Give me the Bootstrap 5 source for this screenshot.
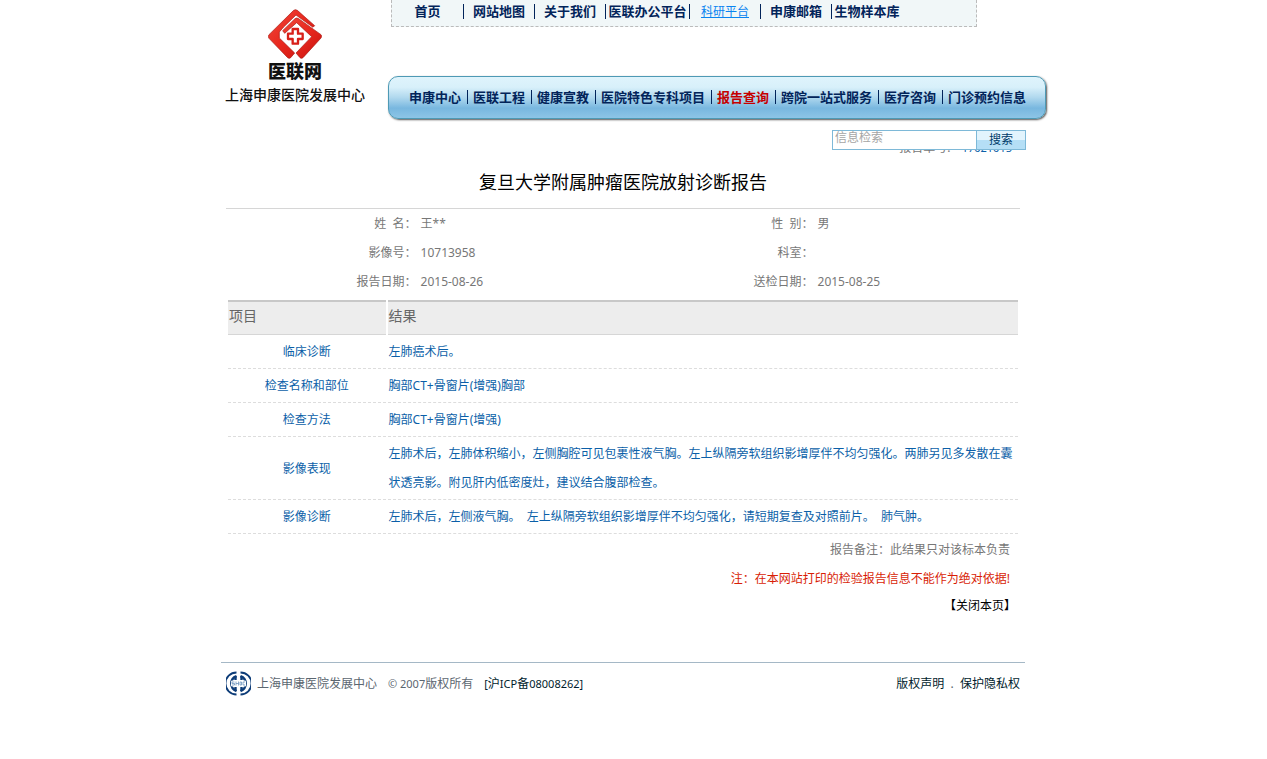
<!DOCTYPE html>
<html lang="zh-CN">
<head>
<meta charset="utf-8">
<meta name="viewport" content="width=device-width, initial-scale=1">
<title>复旦大学附属肿瘤医院放射诊断报告</title>
<link href="https://cdn.jsdelivr.net/npm/bootstrap@5.3.0/dist/css/bootstrap.min.css" rel="stylesheet">
<style>
body{font-family:"Noto Sans","Noto Sans CJK SC",sans-serif;font-size:12px;line-height:29px;color:#777;background:#fff}
a{text-decoration:none;color:inherit}
.page-wrap{max-width:825px}
.brand-col{width:148px;padding-top:9px;color:#111}
.brand-name{font-size:18px;line-height:24px;font-weight:900}
.brand-org{font-size:14px;line-height:24px;font-weight:500;white-space:nowrap}
.nav-col{max-width:658px}
.bold-links{font-size:13px;font-weight:700;line-height:14px;color:#02245a}
.bold-links li{white-space:nowrap}
.top-links{max-width:586px;margin-left:3px;background:#f1f7f8;border:1px dashed #bbb;border-top:0;padding:4px 0 7px}
.top-links li{min-width:71px;text-align:center}
.top-links li.wide-item{min-width:84px}
.top-links li+li,.main-links li+li{border-left:1px solid #02245a}
.top-links .current{font-size:12px;font-weight:400;color:#0a84f0;text-decoration:underline}
.main-links{margin-top:49px;padding:13px 0 14px 15px;border:1px solid #4e9ab5;border-radius:10px;background:linear-gradient(#dff4fc 0%,#d8f0fa 25%,#b0d8ee 50%,#78b7df 76%,#8dc5e6 100%);box-shadow:1px 1px 2px #555}
.main-links li{padding:0 6px 0 5px}
.main-links .current{color:#c60000}
.report{padding-right:21px;margin-top:14px}
.search-box{position:absolute;top:-3px;right:20px;width:194px;height:20px;border:1px solid #7eb9d8;background:#fff}
.search-box input{border:0;padding:0 2px;min-width:0;font-size:12px;line-height:14px;height:14px;color:#777}
.search-box input::placeholder{color:#a5a5a5;opacity:1}
.search-box button{flex:0 0 49px;border:0;border-left:1px solid #7eb9d8;padding:0;font-size:12px;line-height:16px;color:#003c6a;background:linear-gradient(#e2f4fd 50%,#b5dff6 50%)}
.serial-no{padding-right:13px;height:29px}
.serial-no span{color:#0b5fa8;margin-left:8px}
.latin{font-size:11px}
.sheet{margin:0 5px}
.sheet h1{font-size:18px;font-weight:400;line-height:40px;color:#000;padding-bottom:6px;border-bottom:1px solid #d6d6d6}
.facts{grid-template-columns:24% 26% 24% 26%;padding-bottom:4px}
.facts dt{font-weight:400;text-align:right}
.facts dd{padding-left:4px}
.results{width:100%;border-collapse:separate;border-spacing:2px 0;table-layout:fixed;color:#0b5fa8}
.results col:first-child{width:20%}
.results thead th{font-size:14px;font-weight:400;color:#666;line-height:28px;padding:0 1px 4px;background:#ededed;border-top:2px solid #c8c8c8;border-bottom:1px solid #d6d6d6}
.results tbody td,.results tbody th{font-weight:400;padding:2px 1px;border-bottom:1px dashed #ddd}
.results tbody th{text-align:center}
.notes{padding:1px 10px 0 0}
.warn{color:#d81e06}
.close-line{line-height:25px;color:#000;padding-right:4px}
.foot{margin:44px 21px 0 0;padding:6px 5px;border-top:1px solid #a5b8c6;color:#5b6670}
.foot-left{column-gap:6px}
.foot-text{column-gap:11px}
.foot a{color:#001c2c}
@media (max-width:800px){.nav-col{max-width:none}.bold-links{flex-wrap:wrap;row-gap:8px}}
</style>
</head>
<body>
<div class="page-wrap mx-auto">
  <header class="d-flex justify-content-between">
    <a href="#" class="brand-col d-flex flex-column align-items-center flex-shrink-0">
      <svg width="54" height="50" viewBox="172 25 162 150" aria-hidden="true">
        <defs><linearGradient id="red" x1="0" y1="0" x2="1" y2="1"><stop offset="0" stop-color="#f0483a"/><stop offset=".5" stop-color="#e8281e"/><stop offset="1" stop-color="#c8120e"/></linearGradient></defs>
        <g fill="url(#red)" stroke="#a81812" stroke-width="2" stroke-linejoin="round">
          <path d="M249 29Q254 25 260 29L312 75L307 80L256 43L219 79L206 94V112L252 157L240 171Q236 175 231 171L175 113Q171 107 175 102Z"/>
          <path d="M253 54Q258 50 264 54L331 102Q335 107 331 112L277 171Q272 175 268 171L256 157L303 108L258 66L222 98L216 90Z"/>
        </g>
        <path d="M246 85h16v14h14v16h-14v14h-16v-14h-14v-16h14z" fill="#fff" stroke="#d8201a" stroke-width="7" stroke-linejoin="round"/>
      </svg>
      <span class="brand-name">医联网</span>
      <span class="brand-org">上海申康医院发展中心</span>
    </a>
    <div class="nav-col flex-grow-1">
      <nav aria-label="站点">
        <ul class="top-links bold-links list-unstyled d-flex mb-0">
          <li><a href="#">首页</a></li><li><a href="#">网站地图</a></li><li><a href="#">关于我们</a></li><li class="wide-item"><a href="#">医联办公平台</a></li><li><a href="#" class="current">科研平台</a></li><li><a href="#">申康邮箱</a></li><li><a href="#">生物样本库</a></li>
        </ul>
      </nav>
      <nav aria-label="主导航">
        <ul class="main-links bold-links list-unstyled d-flex mb-0">
          <li><a href="#">申康中心</a></li><li><a href="#">医联工程</a></li><li><a href="#">健康宣教</a></li><li><a href="#">医院特色专科项目</a></li><li><a href="#" class="current">报告查询</a></li><li><a href="#">跨院一站式服务</a></li><li><a href="#">医疗咨询</a></li><li><a href="#">门诊预约信息</a></li>
        </ul>
      </nav>
    </div>
  </header>

  <main class="report position-relative">
    <form class="search-box d-flex" role="search">
      <input type="text" class="flex-grow-1" placeholder="信息检索" aria-label="信息检索">
      <button type="button">搜索</button>
    </form>
    <p class="serial-no text-end mb-0">报告单号: <span class="latin">17021015</span></p>
    <div class="sheet">
      <h1 class="text-center mb-0">复旦大学附属肿瘤医院放射诊断报告</h1>
      <dl class="facts d-grid mb-0">
        <dt>姓&nbsp; 名：</dt><dd class="mb-0">王**</dd><dt>性&nbsp; 别：</dt><dd class="mb-0">男</dd>
        <dt>影像号：</dt><dd class="mb-0">10713958</dd><dt>科室：</dt><dd class="mb-0"></dd>
        <dt>报告日期：</dt><dd class="mb-0">2015-08-26</dd><dt>送检日期：</dt><dd class="mb-0">2015-08-25</dd>
      </dl>
      <table class="results">
        <colgroup><col><col></colgroup>
        <thead><tr><th scope="col">项目</th><th scope="col">结果</th></tr></thead>
        <tbody>
          <tr><th scope="row">临床诊断</th><td>左肺癌术后。</td></tr>
          <tr><th scope="row">检查名称和部位</th><td>胸部CT+骨窗片(增强)胸部</td></tr>
          <tr><th scope="row">检查方法</th><td>胸部CT+骨窗片(增强)</td></tr>
          <tr><th scope="row">影像表现</th><td>左肺术后，左肺体积缩小，左侧胸腔可见包裹性液气胸。左上纵隔旁软组织影增厚伴不均匀强化。两肺另见多发散在囊状透亮影。附见肝内低密度灶，建议结合腹部检查。</td></tr>
          <tr><th scope="row">影像诊断</th><td>左肺术后，左侧液气胸。&nbsp; 左上纵隔旁软组织影增厚伴不均匀强化，请短期复查及对照前片。&nbsp; 肺气肿。</td></tr>
        </tbody>
      </table>
      <div class="notes text-end">
        <p class="mb-0">报告备注：此结果只对该标本负责</p>
        <p class="warn mb-0">注：在本网站打印的检验报告信息不能作为绝对依据!</p>
      </div>
      <p class="close-line text-end mb-0"><a href="#">【关闭本页】</a></p>
    </div>
  </main>

  <footer class="foot d-flex align-items-center justify-content-between">
    <div class="foot-left d-flex align-items-center">
      <svg width="25" height="25" viewBox="0 0 25 25" fill="none" stroke="#0d3c78" aria-hidden="true">
        <path d="M10.500 1.500A11 11 0 0 0 10.500 23.500M14.500 1.500A11 11 0 0 1 14.500 23.500" stroke-width="1.800"/>
        <path d="M10.500 5A8 8 0 0 0 10.500 20M14.500 5A8 8 0 0 1 14.500 20" stroke-width="2.400"/>
        <path d="M9.500 5v4M9.500 16v4M15.500 5v4M15.500 16v4" stroke-width="2.400"/>
        <rect x="5" y="9.500" width="15" height="6" rx="1" fill="#fff" stroke="none"/>
        <path d="M8.500 11H6v1.500h2.500V14H6M10 10.500v4M12.500 10.500v4M10 12.500h2.500M14 11h1.500v3H14zM19 11h-2v3h2" stroke-width=".7" stroke="#5f8ab8"/>
      </svg>
      <div class="foot-text d-flex flex-wrap">
        <span>上海申康医院发展中心</span>
        <span><span class="latin">© 2007</span>版权所有</span>
        <a href="#"><span class="latin">[</span>沪<span class="latin">ICP</span>备<span class="latin">08008262]</span></a>
      </div>
    </div>
    <div><a href="#">版权声明</a>&nbsp; .&nbsp; <a href="#">保护隐私权</a></div>
  </footer>
</div>
<script src="https://cdn.jsdelivr.net/npm/bootstrap@5.3.0/dist/js/bootstrap.bundle.min.js"></script>
</body>
</html>
